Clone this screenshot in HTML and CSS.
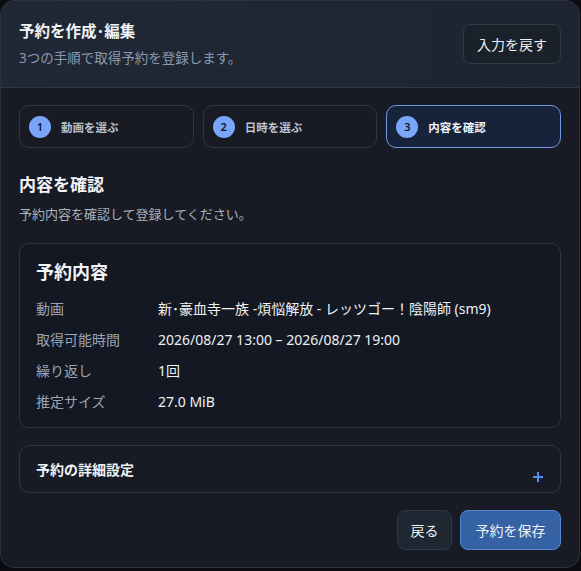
FILE: index.html
```html
<!DOCTYPE html>
<html lang="ja">
<head>
<meta charset="utf-8">
<link rel="stylesheet" href="styles.css">
</head>
<body>
<div class="app">
  <header class="head">
    <div class="head-text">
      <h1 class="title">予約を作成･編集</h1>
      <p class="subtitle">3つの手順で取得予約を登録します。</p>
    </div>
    <button class="btn btn-ghost">入力を戻す</button>
  </header>
  <main class="body">
    <ol class="steps">
      <li class="step"><span class="num">1</span><span class="step-label">動画を選ぶ</span></li>
      <li class="step"><span class="num">2</span><span class="step-label">日時を選ぶ</span></li>
      <li class="step active"><span class="num">3</span><span class="step-label">内容を確認</span></li>
    </ol>
    <h2 class="section-title">内容を確認</h2>
    <p class="section-desc">予約内容を確認して登録してください。</p>
    <section class="card summary">
      <h3 class="card-title">予約内容</h3>
      <dl class="rows">
        <dt>動画</dt><dd>新･豪血寺一族 -煩悩解放 - レッツゴー！陰陽師 (sm9)</dd>
        <dt>取得可能時間</dt><dd>2026/08/27 13:00 – 2026/08/27 19:00</dd>
        <dt>繰り返し</dt><dd>1回</dd>
        <dt>推定サイズ</dt><dd>27.0 MiB</dd>
      </dl>
    </section>
    <section class="card details">
      <span class="details-title">予約の詳細設定</span>
      <svg class="plus" width="10" height="10" viewBox="0 0 10 10"><path d="M5 0v10M0 5h10" stroke="#4f8ff5" stroke-width="2"/></svg>
    </section>
    <div class="actions">
      <button class="btn btn-back">戻る</button>
      <button class="btn btn-primary">予約を保存</button>
    </div>
  </main>
</div>
</body>
</html>
```
FILE: styles.css
```css
* { box-sizing: border-box; }
html, body { margin: 0; padding: 0; }
body {
  background: #0a0c10;
  font-family: "Noto Sans", "Noto Sans CJK JP", sans-serif;
  color: #e6eaf0;
  width: 581px;
  height: 571px;
}
.app {
  width: 580px;
  height: 568px;
  border: 1px solid #2a3240;
  border-radius: 14px;
  overflow: hidden;
  background: #181b24;
  display: flex;
  flex-direction: column;
}
.head {
  height: 87px;
  flex: none;
  display: flex;
  align-items: center;
  justify-content: space-between;
  padding: 0 18px 0 18px;
  background: linear-gradient(90deg, #202835, #1e2531);
  border-bottom: 1px solid #2f3847;
}
.title {
  margin: 0;
  font-size: 15.5px;
  line-height: 20px;
  font-weight: 700;
  color: #f2f4f8;
}
.subtitle {
  margin: 8px 0 0;
  font-size: 13.5px;
  line-height: 18px;
  color: #8b9ab0;
}
.btn {
  font-family: inherit;
  font-size: 14px;
  color: #eef1f5;
  border-radius: 8px;
  height: 40px;
  cursor: pointer;
}
.btn-ghost {
  width: 98px;
  background: #1b212b;
  border: 1px solid #323b4a;
}
.body {
  flex: 1;
  padding: 17px 18px 0;
  display: flex;
  flex-direction: column;
}
.steps {
  list-style: none;
  margin: 0;
  padding: 0;
  display: grid;
  grid-template-columns: 1fr 1fr 1fr;
  gap: 9px;
}
.step {
  height: 43px;
  border: 1px solid #2e3645;
  border-radius: 10px;
  display: flex;
  align-items: center;
  padding-left: 9px;
  gap: 10px;
}
.step.active {
  border-color: #6f97e2;
  background: #16233a;
}
.num {
  width: 22px;
  height: 22px;
  border-radius: 50%;
  background: #7aa5fa;
  color: #0f1726;
  font-size: 11px;
  font-weight: 600;
  display: flex;
  align-items: center;
  justify-content: center;
}
.step-label {
  font-size: 11.5px;
  font-weight: 600;
  color: #b9c2cf;
}
.step.active .step-label { color: #f2f4f8; }
.section-title {
  margin: 26px 0 0;
  font-size: 17px;
  line-height: 22px;
  font-weight: 700;
  color: #f2f4f8;
}
.section-desc {
  margin: 9px 0 0;
  font-size: 13px;
  line-height: 18px;
  color: #a9b2be;
}
.card {
  border: 1px solid #2d3544;
  border-radius: 10px;
}
.summary {
  margin-top: 20px;
  background: #131823;
  padding: 17px 16px 15px;
}
.card-title {
  margin: 0;
  font-size: 18px;
  line-height: 22px;
  font-weight: 700;
  color: #f2f4f8;
}
.rows {
  margin: 16px 0 0;
  display: grid;
  grid-template-columns: 122px 1fr;
  row-gap: 11px;
  font-size: 14px;
  line-height: 20px;
}
.rows dt { color: #9aa4b2; }
.rows dd { margin: 0; color: #eef1f5; }
.details {
  margin-top: 17px;
  height: 48px;
  display: flex;
  justify-content: space-between;
  align-items: flex-start;
  padding: 14px 17px 0 16px;
}
.details-title {
  font-size: 14px;
  line-height: 20px;
  font-weight: 700;
  color: #eef1f5;
}
.plus {
  margin-top: 12px;
}
.actions {
  margin-top: 17px;
  display: flex;
  justify-content: flex-end;
  gap: 8px;
}
.btn-back {
  width: 55px;
  background: #1f2732;
  border: 1px solid #2f3846;
}
.btn-primary {
  width: 101px;
  background: #3562a5;
  border: 1px solid #5a88d2;
}
```
